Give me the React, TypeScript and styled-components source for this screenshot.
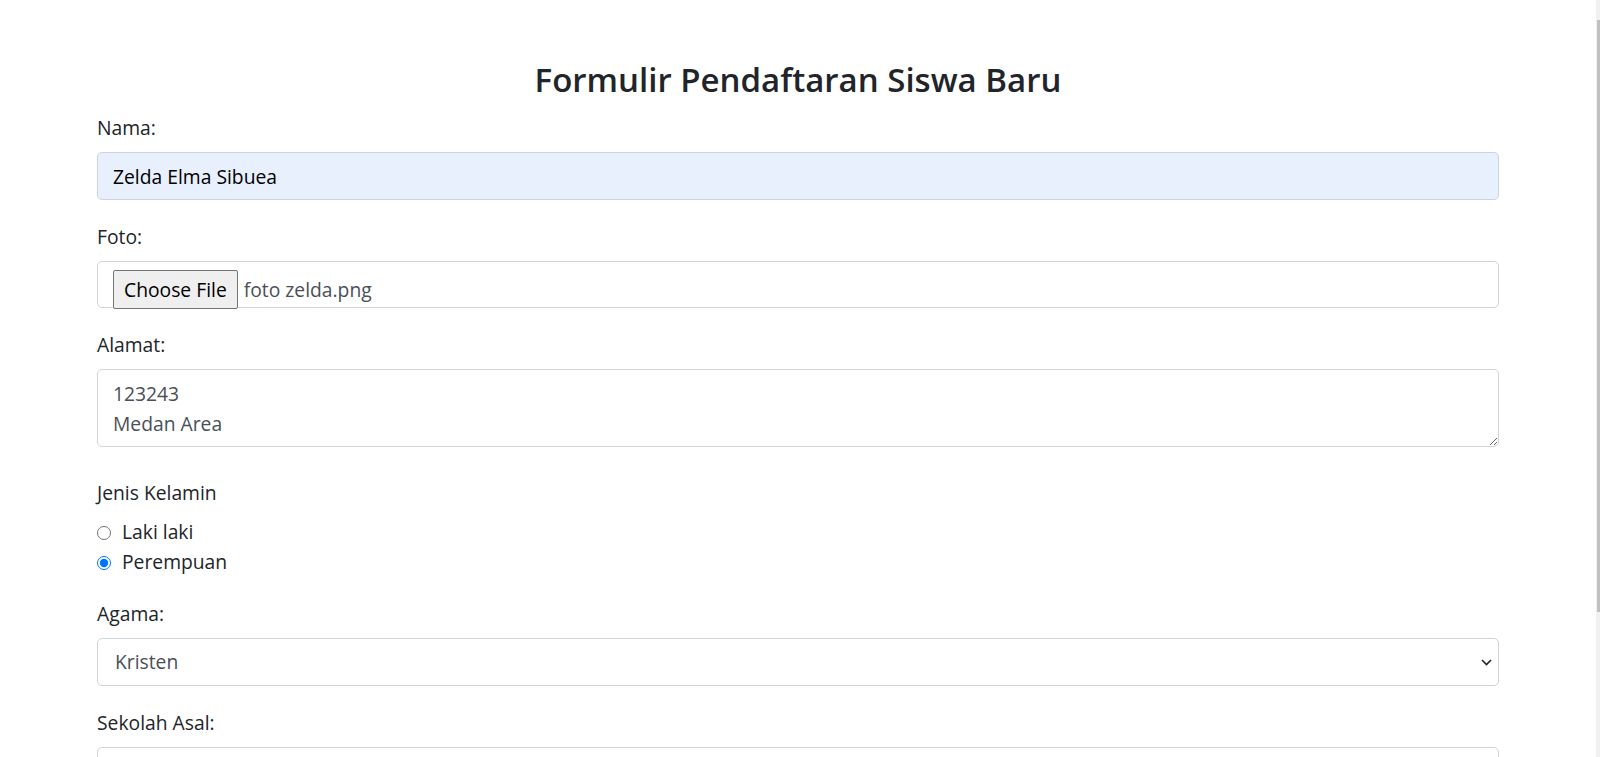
import React from 'react';
import styled, { createGlobalStyle } from 'styled-components';

const GlobalStyle = createGlobalStyle`
  html, body {
    margin: 0;
    padding: 0;
    overflow: hidden;
    background: #fff;
  }
  body {
    font-family: "Open Sans", "Noto Sans", sans-serif;
    font-size: 19.3px;
    line-height: 30px;
    color: #212529;
  }
  * {
    box-sizing: border-box;
  }
`;

const Page = styled.div`
  padding: 59px 101px 0 97px;
`;

const Title = styled.h2`
  margin: 0 0 12px;
  font-size: 33px;
  line-height: 42px;
  font-weight: 600;
  text-align: center;
  color: #212529;
`;

const Group = styled.div<{ $gap?: number }>`
  margin-bottom: ${(p) => p.$gap ?? 22}px;
`;

const Label = styled.label`
  display: block;
  margin-bottom: 9px;
  line-height: 30px;
`;

const Input = styled.input<{ $autofill?: boolean }>`
  display: block;
  width: 100%;
  height: 48px;
  padding: 0 15px;
  font: inherit;
  line-height: 30px;
  color: ${(p) => (p.$autofill ? '#000' : '#495057')};
  background: ${(p) => (p.$autofill ? '#e8f0fe' : '#fff')};
  border: 1px solid #ced4da;
  border-radius: 5px;
  outline: none;
`;

const FileBox = styled.div`
  display: flex;
  align-items: flex-start;
  gap: 6px;
  height: 47px;
  padding: 8px 15px 0 15px;
  border: 1px solid #ced4da;
  border-radius: 5px;
  color: #495057;
`;

const FileButton = styled.button`
  height: 39px;
  padding: 0 10px;
  font: inherit;
  line-height: 37px;
  white-space: nowrap;
  color: #000;
  background: #efefef;
  border: 1px solid #767676;
  border-radius: 2px;
`;

const FileName = styled.span`
  line-height: 39px;
  white-space: nowrap;
`;

const TextArea = styled.textarea`
  display: block;
  width: 100%;
  height: 78px;
  padding: 9px 15px 0;
  font: inherit;
  line-height: 30px;
  color: #495057;
  border: 1px solid #ced4da;
  border-radius: 5px;
  outline: none;
`;

const RadioRow = styled.label`
  display: flex;
  align-items: center;
  gap: 11px;
  height: 30px;
`;

const Radio = styled.input`
  width: 14px;
  height: 14px;
  margin: 1px 0 0;
  accent-color: #0075ff;
`;

const SelectWrap = styled.div`
  position: relative;
`;

const Select = styled.select`
  display: block;
  width: 100%;
  height: 48px;
  padding: 0 15px 0 17px;
  font: inherit;
  color: #495057;
  background: #fff;
  border: 1px solid #ced4da;
  border-radius: 5px;
  appearance: none;
  outline: none;
`;

const Chevron = styled.svg`
  position: absolute;
  right: 7px;
  top: 21px;
  pointer-events: none;
`;

const Scrollbar = styled.div`
  position: fixed;
  top: 0;
  right: 0;
  width: 4px;
  height: 100%;
  background: #f1f1f1;
`;

const Thumb = styled.div`
  margin: 20px 0 0 1px;
  height: 592px;
  background: #c1c1c1;
`;

const App = () => {
  return (
    <>
      <GlobalStyle />
      <Page>
        <Title>Formulir Pendaftaran Siswa Baru</Title>
        <form>
          <Group>
            <Label htmlFor="nama">Nama:</Label>
            <Input id="nama" $autofill defaultValue="Zelda Elma Sibuea" />
          </Group>
          <Group>
            <Label>Foto:</Label>
            <FileBox>
              <FileButton type="button">Choose File</FileButton>
              <FileName>foto zelda.png</FileName>
            </FileBox>
          </Group>
          <Group $gap={31}>
            <Label htmlFor="alamat">Alamat:</Label>
            <TextArea id="alamat" defaultValue={'123243\nMedan Area'} />
          </Group>
          <Group>
            <Label>Jenis Kelamin</Label>
            <RadioRow>
              <Radio type="radio" name="jk" value="L" />
              Laki laki
            </RadioRow>
            <RadioRow>
              <Radio type="radio" name="jk" value="P" defaultChecked />
              Perempuan
            </RadioRow>
          </Group>
          <Group>
            <Label htmlFor="agama">Agama:</Label>
            <SelectWrap>
              <Select id="agama" defaultValue="Kristen">
                <option>Islam</option>
                <option>Kristen</option>
                <option>Katolik</option>
                <option>Hindu</option>
                <option>Budha</option>
              </Select>
              <Chevron width="11" height="7" viewBox="0 0 11 7">
                <polyline points="1,1 5.5,5.5 10,1" fill="none" stroke="#222" strokeWidth="1.6" />
              </Chevron>
            </SelectWrap>
          </Group>
          <Group>
            <Label htmlFor="sekolah">Sekolah Asal:</Label>
            <Input id="sekolah" />
          </Group>
        </form>
      </Page>
      <Scrollbar>
        <Thumb />
      </Scrollbar>
    </>
  );
};

export default App;
